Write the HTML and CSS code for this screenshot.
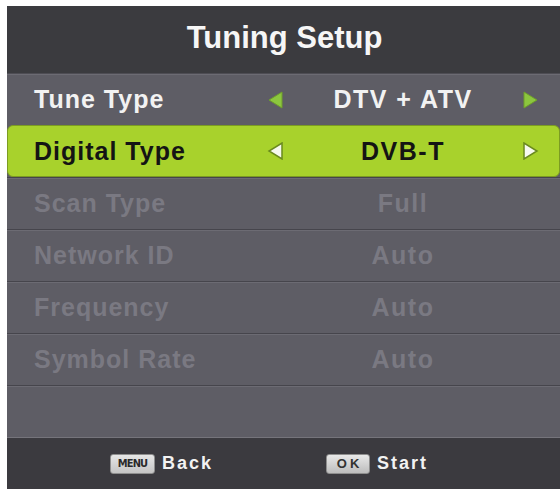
FILE: index.html
```html
<!DOCTYPE html>
<html>
<head>
<meta charset="utf-8">
<link rel="stylesheet" href="styles.css">
</head>
<body>
<div class="panel">
  <div class="title">Tuning Setup</div>
  <div class="list">
    <div class="row">
      <span class="label">Tune Type</span>
      <svg class="arr" width="16" height="18" viewBox="0 0 16 18"><polygon points="15,1 15,17 2,9" fill="#8cc63e" stroke="#6e9e2a" stroke-width="1"/></svg>
      <span class="value">DTV + ATV</span>
      <svg class="arr arr-r" width="16" height="18" viewBox="0 0 16 18"><polygon points="1,1 1,17 14,9" fill="#8cc63e" stroke="#6e9e2a" stroke-width="1"/></svg>
    </div>
    <div class="row active">
      <span class="label">Digital Type</span>
      <svg class="arr" width="16" height="18" viewBox="0 0 16 18"><polygon points="15,1 15,17 2,9" fill="#f6f9ef" stroke="#6a8a1e" stroke-width="1.5"/></svg>
      <span class="value">DVB-T</span>
      <svg class="arr arr-r" width="16" height="18" viewBox="0 0 16 18"><polygon points="1,1 1,17 14,9" fill="#f6f9ef" stroke="#6a8a1e" stroke-width="1.5"/></svg>
    </div>
    <div class="row dim">
      <span class="label">Scan Type</span>
      <span class="value">Full</span>
    </div>
    <div class="row dim">
      <span class="label">Network ID</span>
      <span class="value">Auto</span>
    </div>
    <div class="row dim">
      <span class="label">Frequency</span>
      <span class="value">Auto</span>
    </div>
    <div class="row dim">
      <span class="label">Symbol Rate</span>
      <span class="value">Auto</span>
    </div>
    <div class="row"></div>
  </div>
  <div class="footer">
    <div class="hint"><span class="key key-menu">MENU</span><span class="hint-text">Back</span></div>
    <div class="hint"><span class="key key-ok">OK</span><span class="hint-text">Start</span></div>
  </div>
</div>
</body>
</html>
```

FILE: styles.css
```css
html, body {
  margin: 0;
  padding: 0;
  background: #ffffff;
}
body {
  padding: 6px 0 0 7px;
  font-family: "Liberation Sans", Arial, sans-serif;
  overflow: hidden;
}
.panel {
  width: 553px;
  height: 483px;
  background: #5e5d65;
  display: flex;
  flex-direction: column;
}
.title {
  height: 67px;
  background: #3b3b3f;
  color: #f6f6f6;
  font-weight: bold;
  font-size: 31px;
  text-align: center;
  line-height: 64px;
  padding-left: 2px;
}
.list {
  display: flex;
  flex-direction: column;
}
.row {
  height: 51px;
  border-top: 1px solid #46454c;
  box-shadow: inset 0 1px 0 #6c6b73;
  display: grid;
  grid-template-columns: 233px 16px 240px 17px;
  align-items: center;
  padding-left: 27px;
  color: #f2f2f2;
  font-weight: bold;
  font-size: 25px;
  letter-spacing: 1px;
}
.row:first-child {
  border-top-color: #4e4d54;
}
.label {
  grid-column: 1;
  white-space: nowrap;
}
.value {
  grid-column: 3;
  text-align: center;
  letter-spacing: 1.5px;
  white-space: nowrap;
}
.arr {
  display: block;
}
.arr-r {
  grid-column: 4;
}
.row.active {
  background: #a8d22c;
  color: #141414;
  border: 1px solid #7c9c22;
  border-radius: 6px;
  box-shadow: none;
  height: 50px;
  padding-left: 26px;
}
.row.dim {
  color: #7a7982;
}
.footer {
  flex: 1;
  background: #3b3a3f;
  border-top: 1px solid #75747b;
  display: flex;
  align-items: center;
  padding-left: 103px;
  gap: 113px;
}
.hint {
  display: flex;
  align-items: center;
  gap: 7px;
}
.hint-text {
  color: #f2f2f2;
  font-weight: bold;
  font-size: 18px;
  letter-spacing: 2px;
}
.key {
  display: flex;
  align-items: center;
  justify-content: center;
  border-radius: 3px;
  color: #2a2a2a;
  font-weight: bold;
}
.key-menu {
  width: 43px;
  height: 18px;
  background: linear-gradient(#e6e6e6, #c4c4c4);
  border: 1px solid #8e8e8e;
  font-size: 11px;
  letter-spacing: -0.9px;
  font-family: "DejaVu Sans Condensed", "Liberation Sans Narrow", sans-serif;
}
.key-ok {
  width: 44px;
  height: 20px;
  background: linear-gradient(#e8e8e8, #bdbdbd);
  border: 1px solid #8e8e8e;
  font-size: 13px;
  letter-spacing: 3px;
  padding-left: 3px;
  box-sizing: border-box;
  color: #333;
}
```
